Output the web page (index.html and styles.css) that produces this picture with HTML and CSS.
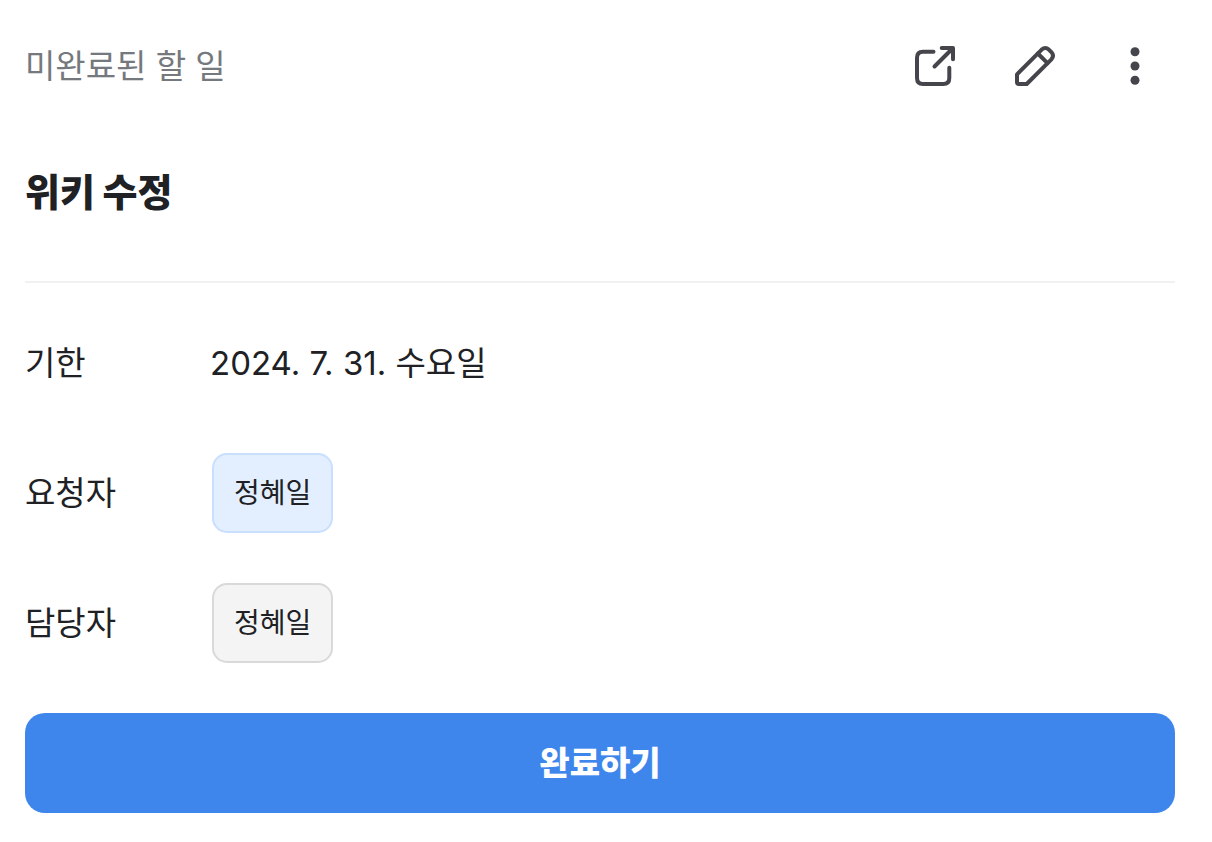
FILE: index.html
```html
<!DOCTYPE html>
<html lang="ko">
<head>
<meta charset="utf-8">
<meta name="viewport" content="width=device-width, initial-scale=1">
<title>위키 수정</title>
<link rel="stylesheet" href="styles.css">
</head>
<body>
<main class="task">
  <header class="task-header">
    <p class="task-status">미완료된 할 일</p>
    <div class="task-actions">
      <button class="icon-button" type="button" aria-label="새 창으로 열기">
        <svg class="icon" viewBox="0 0 40 40" aria-hidden="true">
          <path d="M18.500 5.700H8Q2 5.700 2 11.700V32Q2 38 8 38H28.300Q34.300 38 34.300 32V21.700"/>
          <path d="M19.500 20.500L37 3M26.700 2H38V13.300"/>
        </svg>
      </button>
      <button class="icon-button" type="button" aria-label="수정">
        <svg class="icon" viewBox="0 0 40 40" aria-hidden="true">
          <path d="M2 28.300L26.700 3.600Q30.300 0.400 33.800 3.600L36.400 6.200Q39.600 9.700 36.400 13.300L11.700 38H4Q2 38 2 36Z"/>
          <path d="M22.800 7.500L32.500 17.200"/>
        </svg>
      </button>
      <button class="icon-button" type="button" aria-label="더보기">
        <svg class="icon icon-solid" viewBox="0 0 40 40" aria-hidden="true">
          <circle cx="20" cy="5.700" r="4.500"/>
          <circle cx="20" cy="20" r="4.500"/>
          <circle cx="20" cy="34.300" r="4.500"/>
        </svg>
      </button>
    </div>
  </header>
  <h1 class="task-title">위키 수정</h1>
  <dl class="task-fields">
    <div class="field">
      <dt class="field-label">기한</dt>
      <dd class="field-value">2024. 7. 31. 수요일</dd>
    </div>
    <div class="field">
      <dt class="field-label">요청자</dt>
      <dd class="field-value"><span class="chip chip-requester">정혜일</span></dd>
    </div>
    <div class="field">
      <dt class="field-label">담당자</dt>
      <dd class="field-value"><span class="chip">정혜일</span></dd>
    </div>
  </dl>
  <button class="complete-button" type="button">완료하기</button>
</main>
</body>
</html>
```

FILE: styles.css
```css
* {
  box-sizing: border-box;
}

body {
  margin: 0;
  background: #fff;
  color: #202124;
  font-family: Inter, "Noto Sans CJK KR", sans-serif;
  font-size: 33px;
  line-height: 48px;
}

.task {
  padding: 26px 37px 29px 25px;
}

.task-header {
  display: flex;
  align-items: center;
  justify-content: space-between;
}

.task-status {
  margin: 0;
  color: #75787d;
}

.task-actions {
  display: flex;
  gap: 20px;
}

.icon-button {
  display: grid;
  place-items: center;
  width: 80px;
  height: 80px;
  padding: 0;
  border: 0;
  background: none;
  color: #45464c;
  cursor: pointer;
}

.icon {
  width: 40px;
  height: 40px;
  overflow: visible;
  fill: none;
  stroke: currentColor;
  stroke-width: 4;
  stroke-linecap: round;
  stroke-linejoin: round;
}

.icon-solid {
  fill: currentColor;
  stroke: none;
}

.task-title {
  margin: 0;
  padding: 62px 0 65px;
  border-bottom: 2px solid #f1f1f2;
  font-size: 38px;
  font-weight: 900;
  line-height: 48px;
}

.task-fields {
  display: grid;
  gap: 50px;
  margin: 0;
  padding: 40px 0 50px;
}

.field {
  display: grid;
  grid-template-columns: 185px 1fr;
  align-items: center;
  min-height: 80px;
}

.field-value {
  display: flex;
  margin: 0;
}

.chip {
  margin-left: 2px;
  padding: 14px 20px;
  border: 2px solid #d9d9d9;
  border-radius: 15px;
  background: #f4f4f4;
  font-size: 28px;
}

.chip-requester {
  border-color: #c8dffd;
  background: #e3effe;
}

.complete-button {
  display: block;
  width: 100%;
  padding: 26px;
  border: 0;
  border-radius: 20px;
  background: #3e86ec;
  color: #fff;
  font: inherit;
  font-weight: 900;
  cursor: pointer;
}
```
